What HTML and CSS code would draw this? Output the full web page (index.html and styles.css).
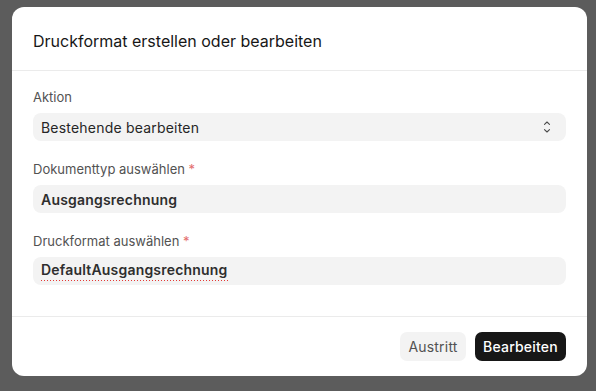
FILE: index.html
```html
<!DOCTYPE html>
<html lang="de">
<head>
<meta charset="utf-8">
<link rel="stylesheet" href="styles.css">
</head>
<body>
<div class="overlay">
  <div class="dialog">
    <div class="header">Druckformat erstellen oder bearbeiten</div>
    <div class="body">
      <div class="field">
        <div class="label">Aktion</div>
        <div class="input select">
          <span>Bestehende bearbeiten</span>
          <svg class="chev" width="8" height="14" viewBox="0 0 8 14"><path d="M1.5 4.3 L4 2 L6.5 4.3 M1.5 9.7 L4 12 L6.5 9.7" fill="none" stroke="#4a4a4a" stroke-width="1.1" stroke-linecap="round" stroke-linejoin="round"/></svg>
        </div>
      </div>
      <div class="field">
        <div class="label">Dokumenttyp auswählen <span class="req">*</span></div>
        <div class="input bold">Ausgangsrechnung</div>
      </div>
      <div class="field">
        <div class="label">Druckformat auswählen <span class="req">*</span></div>
        <div class="input bold"><span class="spell">DefaultAusgangsrechnung</span></div>
      </div>
    </div>
    <div class="footer">
      <button class="btn secondary">Austritt</button>
      <button class="btn primary">Bearbeiten</button>
    </div>
  </div>
</div>
</body>
</html>
```
FILE: styles.css
```css
html, body {
  margin: 0;
  padding: 0;
  background: #5c5c5c;
  font-family: Inter, "Noto Sans", sans-serif;
  width: 596px;
  height: 391px;
  overflow: hidden;
}
.overlay {
  padding: 7px 9px 0 12px;
}
.dialog {
  width: 575px;
  height: 369px;
  background: #fff;
  border-radius: 12px;
  display: flex;
  flex-direction: column;
  box-sizing: border-box;
}
.header {
  height: 64px;
  box-sizing: border-box;
  padding: 24px 21px 0;
  font-size: 16px;
  color: #171717;
  border-bottom: 1px solid #ebebeb;
  line-height: 20px;
}
.body {
  padding: 18px 21px 0;
  height: 246px;
  box-sizing: border-box;
  border-bottom: 1px solid #ebebeb;
  display: flex;
  flex-direction: column;
  gap: 20px;
}
.field {
  display: flex;
  flex-direction: column;
  gap: 8px;
}
.label {
  font-size: 13px;
  color: #525252;
  line-height: 16px;
}
.req { color: #e36d6d; }
.input {
  height: 28px;
  background: #f3f3f3;
  border-radius: 8px;
  padding: 0 8px;
  display: flex;
  align-items: center;
  font-size: 14px;
  letter-spacing: 0.2px;
  color: #262626;
}
.select { justify-content: space-between; padding-right: 15px; }
.bold { font-weight: 600; color: #2e2e2e; }
.spell {
  padding-bottom: 3px;
  background: linear-gradient(to right, #e53935 50%, transparent 50%) left bottom / 3px 1px repeat-x;
}
.footer {
  flex: 1;
  display: flex;
  justify-content: flex-end;
  align-items: flex-start;
  padding: 15px 21px 0;
  gap: 9px;
}
.btn {
  height: 29px;
  border: none;
  border-radius: 7px;
  font-family: Inter, "Noto Sans", sans-serif;
  font-size: 14px;
  letter-spacing: 0.2px;
  padding: 0 8px;
}
.secondary { background: #f3f3f3; color: #525252; width: 66px; }
.primary { background: #171717; color: #fff; font-weight: 500; width: 91px; }
```
